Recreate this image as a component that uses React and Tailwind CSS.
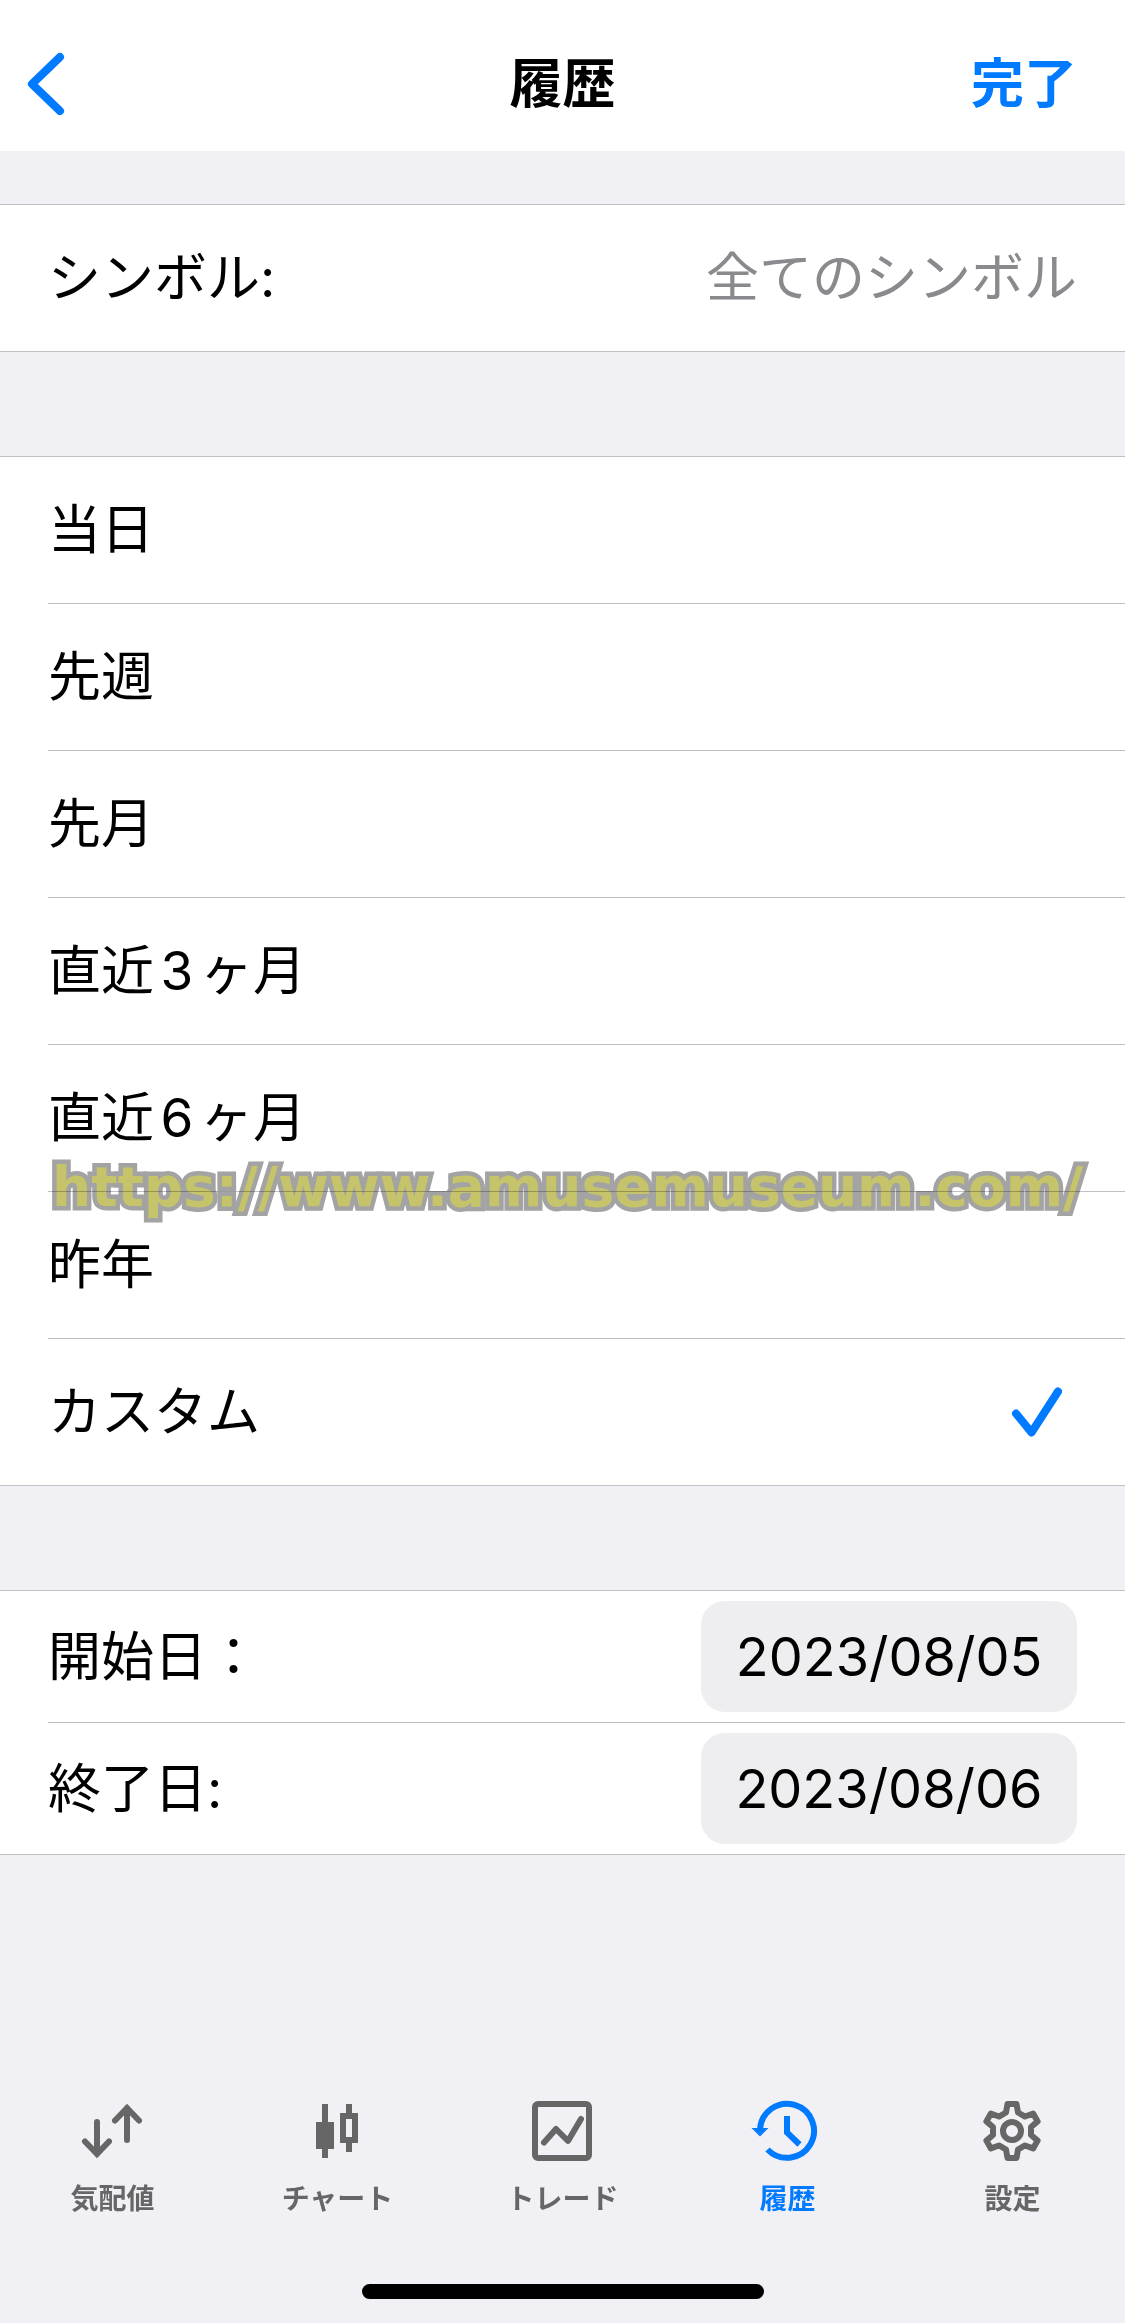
import React, { useState } from 'react';
import clsx from 'clsx';

const PERIODS = ['当日', '先週', '先月', '直近3ヶ月', '直近6ヶ月', '昨年', 'カスタム'];

// one tooth of the gear, relative to its centre
const TOOTH = [[-6, -18.5], [-4.5, -27], [4.5, -27], [6, -18.5]];
const GEAR_POINTS = [0, 60, 120, 180, 240, 300].flatMap((deg) => {
    const a = (deg * Math.PI) / 180;
    return TOOTH.map(([x, y]) => `${36 + x * Math.cos(a) - y * Math.sin(a)},${36 + x * Math.sin(a) + y * Math.cos(a)}`);
}).join(' ');

const TabIcon = ({ children }) => (
    <svg className="w-[73px] h-[72px]" viewBox="0 0 73 72" fill="none" stroke="currentColor" strokeWidth="6" aria-hidden="true">
        {children}
    </svg>
);

const QuotesIcon = () => (
    <TabIcon>
        <path d="M21 27V59M9 46.5L21 59L33 46.5M51 45V13M39 25.5L51 13L63 25.5" strokeLinecap="round" />
    </TabIcon>
);

const CandlesIcon = () => (
    <TabIcon>
        <path d="M21 9h6v18h6v27h-6v9h-6v-9h-6V27h6z" fill="currentColor" stroke="none" />
        <path d="M48 9v12M48 48v9M42 21h12v24H42z" />
    </TabIcon>
);

const TradeIcon = () => (
    <TabIcon>
        <rect x="9" y="9" width="54" height="54" rx="3" />
        <path d="M18 47.5L30 34L42 46L55 24" strokeLinecap="round" strokeLinejoin="round" />
    </TabIcon>
);

const HistoryIcon = () => (
    <TabIcon>
        <path d="M9 35A27 27 0 1 1 16.5 54.5M36 21V37.5L48.5 49.5" />
        <path d="M0.5 33H17.5L9 41.5z" fill="currentColor" stroke="none" />
    </TabIcon>
);

const SettingsIcon = () => (
    <TabIcon>
        <polygon points={GEAR_POINTS} strokeLinejoin="round" />
        <circle cx="36" cy="36" r="9" />
    </TabIcon>
);

const TABS = [
    { id: 'quotes', label: '気配値', Icon: QuotesIcon },
    { id: 'chart', label: 'チャート', Icon: CandlesIcon },
    { id: 'trade', label: 'トレード', Icon: TradeIcon },
    { id: 'history', label: '履歴', Icon: HistoryIcon },
    { id: 'settings', label: '設定', Icon: SettingsIcon },
];

const DateRow = ({ id, label, value, onChange }) => (
    <div className="flex items-center justify-between py-[10px] pr-12">
        <label htmlFor={id}>{label}</label>
        <input
            id={id}
            type="text"
            value={value}
            onChange={(e) => onChange(e.target.value)}
            className="w-[376px] h-[111px] rounded-3xl bg-[#eeeef0] text-center text-[54px]"
        />
    </div>
);

const App = () => {
    const [period, setPeriod] = useState('カスタム');
    const [from, setFrom] = useState('2023/08/05');
    const [to, setTo] = useState('2023/08/06');

    return (
        <div className="min-h-screen flex flex-col bg-[#f1f0f5] text-black text-[53px] leading-[74px] font-normal font-['Inter','Noto_Sans_CJK_JP',sans-serif]">
            {/* Header */}
            <header className="grid grid-cols-3 items-center bg-white pt-[47px] pb-[30px]">
                <button type="button" aria-label="戻る" className="ml-[27px] justify-self-start">
                    <svg className="w-[38px] h-16 text-[#007aff]" viewBox="0 0 38 64" fill="none" stroke="currentColor" strokeWidth="8" strokeLinecap="round" strokeLinejoin="round">
                        <path d="M33 5L5 32L33 59" />
                    </svg>
                </button>
                <h1 className="text-center font-bold">履歴</h1>
                <button type="button" className="mr-12 justify-self-end text-[#007aff] font-bold">完了</button>
            </header>

            <main>
                {/* Symbol */}
                <section className="mt-[53px] border-y border-[#c0c0c2] bg-white">
                    <button type="button" className="flex w-full items-center justify-between px-12 py-9">
                        <span>シンボル:</span>
                        <span className="text-[#8a8a8e]">全てのシンボル</span>
                    </button>
                </section>

                {/* Period */}
                <section className="relative mt-[104px] border-y border-[#c0c0c2] bg-white">
                    <div role="radiogroup" aria-label="期間" className="ml-12 divide-y divide-[#c0c0c2]">
                        {PERIODS.map((p) => (
                            <label key={p} className="flex items-center justify-between py-9 pr-[63px] [text-autospace:normal]">
                                {p}
                                <input
                                    type="radio"
                                    name="period"
                                    checked={period === p}
                                    onChange={() => setPeriod(p)}
                                    className="peer appearance-none ml-auto"
                                />
                                <svg className="invisible peer-checked:visible w-[50px] h-[50px] text-[#007aff]" viewBox="0 0 50 50" fill="none" stroke="currentColor" strokeWidth="8" strokeLinecap="round" strokeLinejoin="round" aria-hidden="true">
                                    <path d="M4 26.5L19.5 45.5L46 4.5" />
                                </svg>
                            </label>
                        ))}
                    </div>
                    <p className="pointer-events-none absolute top-5/7 left-13 -mt-1 -translate-y-1/2 whitespace-nowrap font-['DejaVu_Sans',sans-serif] font-bold text-[55px] text-[#c6c46a] [-webkit-text-stroke:9px_#a3a3a3] [paint-order:stroke_fill] mix-blend-multiply">
                        https://www.amusemuseum.com/
                    </p>
                </section>

                {/* Date range */}
                <section className="mt-[104px] border-y border-[#c0c0c2] bg-white">
                    <div className="ml-12 divide-y divide-[#c0c0c2]">
                        <DateRow id="from" label="開始日：" value={from} onChange={setFrom} />
                        <DateRow id="to" label="終了日:" value={to} onChange={setTo} />
                    </div>
                </section>
            </main>

            {/* Tab bar */}
            <nav className="mt-auto flex">
                {TABS.map(({ id, label, Icon }) => (
                    <a
                        key={id}
                        href={`#${id}`}
                        className={clsx(
                            'flex flex-1 flex-col items-center gap-3.5 text-[28px] leading-9 font-bold',
                            id === 'history' ? 'text-[#007aff]' : 'text-[#666666]'
                        )}
                    >
                        <Icon />
                        {label}
                    </a>
                ))}
            </nav>
            <div className="mx-auto mt-[67px] mb-6 h-[15px] w-[402px] rounded-full bg-black" />
        </div>
    );
};

export default App;
